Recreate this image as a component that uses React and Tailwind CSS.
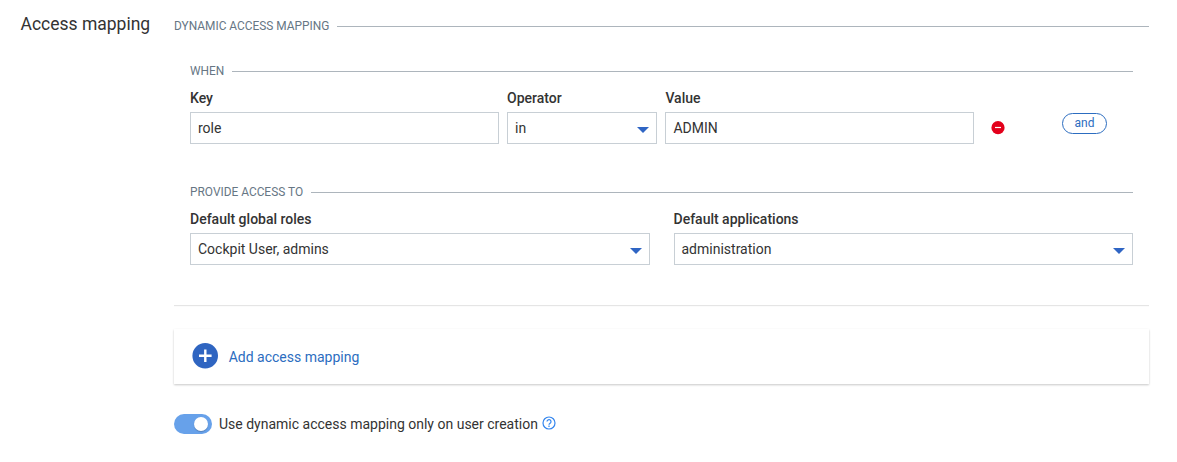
import React from 'react';

function Legend({ children }) {
  return (
    <div className="flex h-4 items-center gap-2 text-[11.9px] leading-4 text-[#667684]">
      <span className="whitespace-nowrap">{children}</span>
      <span className="mt-px h-px flex-1 bg-[#adb5bc]" />
    </div>
  );
}

function Caret() {
  return (
    <svg width="12" height="6" viewBox="0 0 12 6" className="mt-1 shrink-0" fill="#2f65c4">
      <path d="M0 0h12L6 6z" />
    </svg>
  );
}

function Field({ label, value, select, className }) {
  return (
    <div className={className}>
      <div className="h-5 text-[14px] leading-5 font-medium">{label}</div>
      <div className="mt-1 flex h-8 items-center justify-between border border-[#c8cfd5] bg-white pr-[7px] pl-[7px] text-[14px]">
        <span>{value}</span>
        {select && <Caret />}
      </div>
    </div>
  );
}

export default function App() {
  return (
    <div className="flex h-[462px] w-[1177px] overflow-hidden bg-white font-[Roboto,sans-serif] text-[#333333]">
      <h2 className="w-[174px] pt-3 pl-[20.5px] text-[17.5px] leading-6">Access mapping</h2>
      <div className="w-[975px] pt-[18px]">
        <Legend>DYNAMIC ACCESS MAPPING</Legend>

        <section className="mt-[14px] h-[257px] px-4 pt-[15px] shadow-[0_1px_1px_rgba(0,0,0,0.1)] [clip-path:inset(1px_0_-4px_0)]">
          <Legend>WHEN</Legend>
          <div className="mt-[9px] flex items-start">
            <Field label="Key" value="role" className="w-[309px]" />
            <Field label="Operator" value="in" select className="ml-2 w-[150px]" />
            <Field label="Value" value="ADMIN" className="ml-[8.4px] w-[308.6px]" />
            <svg width="14" height="14" viewBox="0 0 14 14" className="mt-[33px] ml-[17px]">
              <circle cx="7" cy="6.7" r="6.6" fill="#e3001b" />
              <path d="M4 6.5h6" stroke="#fff" strokeWidth="1.2" />
            </svg>
            <button className="mt-[25px] ml-[57px] flex h-[21px] w-[45px] items-center justify-center rounded-full border border-[#2c6dc0] pb-[2px] text-[12px] leading-4 text-[#2c6dc0]">
              and
            </button>
          </div>
          <div className="mt-10">
            <Legend>PROVIDE ACCESS TO</Legend>
          </div>
          <div className="mt-[9px] flex gap-6">
            <Field label="Default global roles" value="Cockpit User, admins" select className="flex-1" />
            <Field label="Default applications" value="administration" select className="flex-1" />
          </div>
        </section>

        <section className="mt-6 flex h-[55px] items-center pl-[18px] shadow-[0_1px_2px_rgba(0,0,0,0.22)]">
          <svg width="26" height="26" viewBox="0 0 26 26" className="mb-px">
            <circle cx="13.2" cy="12.8" r="12.8" fill="#2f65c1" />
            <path d="M7 12.8h12.6M13.3 6.5v12.6" stroke="#fff" strokeWidth="2.4" />
          </svg>
          <span className="ml-[10.7px] text-[14px] leading-5 text-[#2c6dc0]">Add access mapping</span>
        </section>

        <div className="mt-[30px] flex h-5 items-center">
          <span className="flex h-5 w-[38px] items-center justify-end rounded-full bg-[#67a1ea] pr-1">
            <span className="h-[14px] w-[14px] rounded-full bg-white shadow-[0_1px_1px_rgba(0,0,0,0.2)]" />
          </span>
          <span className="ml-[7px] text-[14px] leading-5">Use dynamic access mapping only on user creation</span>
          <svg width="14" height="14" viewBox="0 0 14 14" fill="none" className="mb-[3px] ml-1" stroke="#3385ee">
            <circle cx="7" cy="7" r="6" strokeWidth="1.2" />
            <path d="M5 5.6a2 2 0 1 1 3.3 1.5C7.5 7.7 7 8 7 8.8M7 9.6v1.3" strokeWidth="1.2" />
          </svg>
        </div>
      </div>
    </div>
  );
}
